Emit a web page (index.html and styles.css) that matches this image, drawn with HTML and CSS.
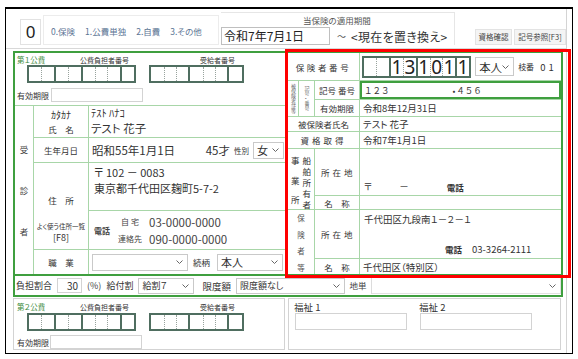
FILE: index.html
```html
<!DOCTYPE html>
<html lang="ja">
<head>
<meta charset="utf-8">
<link rel="stylesheet" href="styles.css">
</head>
<body>
<div class="frame">
  <div class="content">
    <div class="topbar">
      <div class="zero">0</div>
      <div class="kinds"><span>0.保険</span><span>1.公費単独</span><span>2.自費</span><span>3.その他</span></div>
      <div class="period">
        <div class="period-label">当保険の適用期間</div>
        <div class="period-row">
          <div class="date-input">令和7年7月1日</div>
          <span class="tilde">～</span>
          <span class="replace">&lt;現在を置き換え&gt;</span>
        </div>
      </div>
      <div class="btns">
        <div class="btn b1">資格確認</div>
        <div class="btn b2">記号参照[F3]</div>
      </div>
    </div>

    <div class="green">
      <div class="left">
        <div class="kohi">
          <div class="kohi-head"><span class="kh1">第１公費</span><span class="kh2">公費負担者番号</span><span class="kh3">受給者番号</span></div>
          <div class="digits">
            <div class="dg"><span></span><span></span></div>
            <div class="dg"><span></span><span></span></div>
            <div class="dg"><span></span><span></span><span></span></div>
            <div class="dg"><span></span></div>
            <div class="dg gap"><span></span><span></span><span></span></div>
            <div class="dg"><span></span><span></span><span></span></div>
            <div class="dg"><span></span></div>
          </div>
          <div class="valid"><span class="valid-l">有効期限</span><div class="inp valid-i"></div></div>
        </div>
        <div class="patient">
          <div class="side"><span>受</span><span>診</span><span>者</span></div>
          <div class="pl kn"><span class="kn1">ｶﾀｶﾅ</span><span class="kn2">氏　名</span></div>
          <div class="pv kana"><div class="hk">ﾃｽﾄ ﾊﾅｺ</div><div class="nm">テスト 花子</div></div>
          <div class="pl">生年月日</div>
          <div class="pv birth"><span>昭和55年1月1日</span><span class="age">45才</span><span class="sexl">性別</span><div class="sel w-sex"><span>女</span><svg width="7" height="4" viewBox="0 0 7 4"><path d="M0.5 0.5 L3.5 3.5 L6.5 0.5" fill="none" stroke="#666" stroke-width="1"/></svg></div></div>
          <div class="pl adr"><span class="ad1">住　所</span><span class="ad2">よく使う住所一覧</span><span class="ad3">[F8]</span></div>
          <div class="pv addr"><div>〒 102 － 0083</div><div>東京都千代田区麹町5-7-2</div></div>
          <div class="pv tel">
            <span class="tel-l">電話</span>
            <div class="tel-rows">
              <div class="tel-row"><span class="tel-k">自 宅</span><span class="tel-n">03-0000-0000</span></div>
              <div class="tel-row"><span class="tel-k">連絡先</span><span class="tel-n">090-0000-0000</span></div>
            </div>
          </div>
          <div class="pl">職　業</div>
          <div class="pv job"><div class="sel w-job"><span></span><svg width="7" height="4" viewBox="0 0 7 4"><path d="M0.5 0.5 L3.5 3.5 L6.5 0.5" fill="none" stroke="#666" stroke-width="1"/></svg></div><span class="rel">続柄</span><div class="sel w-rel"><span>本人</span><svg width="7" height="4" viewBox="0 0 7 4"><path d="M0.5 0.5 L3.5 3.5 L6.5 0.5" fill="none" stroke="#666" stroke-width="1"/></svg></div></div>
        </div>
      </div>

      <div class="ins">
        <div class="il c13 sp5">保険者番号</div>
        <div class="iv c4 num">
          <div class="dg big"><span></span><span></span></div>
          <div class="dg big"><span>1</span><span>3</span></div>
          <div class="dg big"><span>1</span><span>0</span><span>1</span></div>
          <div class="dg big"><span>1</span></div>
          <div class="sel w-hon"><span>本人</span><svg width="7" height="4" viewBox="0 0 7 4"><path d="M0.5 0.5 L3.5 3.5 L6.5 0.5" fill="none" stroke="#666" stroke-width="1"/></svg></div>
          <span class="eda">枝番</span><span class="edan">0 1</span>
        </div>

        <div class="tiny c1 rs2"><span>被保険者証等</span></div>
        <div class="tiny c2 rs2"><span>記号・番号</span></div>
        <div class="il c3">記号 番号</div>
        <div class="iv c4 kigo"><span class="k1">１２３</span><span class="k2">•４５６</span></div>
        <div class="il c3">有効期限</div>
        <div class="iv c4">令和8年12月31日</div>

        <div class="il c13">被保険者氏名</div>
        <div class="iv c4">テスト 花子</div>
        <div class="il c13 sp4">資格取得</div>
        <div class="iv c4">令和7年1月1日</div>

        <div class="vt c12 rs2 jig">
          <div class="vcol spread"><span>事</span><span>業</span><span>所</span></div>
          <div class="vcol"><span>船</span><span>舶</span><span>所</span><span>有</span><span>者</span></div>
        </div>
        <div class="il c3 sp2">所 在 地</div>
        <div class="iv c4 jaddr"><span class="z1">〒</span><span class="z2">－</span><span class="z3">電話</span></div>
        <div class="il c3">名　称</div>
        <div class="iv c4"></div>

        <div class="vt c12 rs2 hok">
          <div class="vcol spread small"><span>保</span><span>険</span><span>者</span><span>等</span></div>
        </div>
        <div class="il c3 sp2">所 在 地</div>
        <div class="iv c4 haddr"><div>千代田区九段南１－２－１</div><div class="htel"><span class="z3b">電話</span><span>03-3264-2111</span></div></div>
        <div class="il c3">名　称</div>
        <div class="iv c4">千代田区（特別区）</div>
      </div>

      <div class="burden">
        <span class="bl b-rate">負担割合</span>
        <div class="inp rate">30</div>
        <span class="pct">(%)</span>
        <span class="bl b-kyu">給付割</span>
        <div class="sel w-kyu"><span>給割７</span><svg width="7" height="4" viewBox="0 0 7 4"><path d="M0.5 0.5 L3.5 3.5 L6.5 0.5" fill="none" stroke="#666" stroke-width="1"/></svg></div>
        <span class="bl b-gen">限度額</span>
        <div class="sel w-gen"><span>限度額なし</span><svg width="7" height="4" viewBox="0 0 7 4"><path d="M0.5 0.5 L3.5 3.5 L6.5 0.5" fill="none" stroke="#666" stroke-width="1"/></svg></div>
        <div class="chitan">地単</div>
        <div class="sel w-chi"><span></span><svg width="7" height="4" viewBox="0 0 7 4"><path d="M0.5 0.5 L3.5 3.5 L6.5 0.5" fill="none" stroke="#666" stroke-width="1"/></svg></div>
      </div>
    </div>

    <div class="bottom">
      <div class="box kohi2">
        <div class="kohi-head"><span class="kh1">第２公費</span><span class="kh2">公費負担者番号</span><span class="kh3">受給者番号</span></div>
        <div class="digits">
          <div class="dg"><span></span><span></span></div>
          <div class="dg"><span></span><span></span></div>
          <div class="dg"><span></span><span></span><span></span></div>
          <div class="dg"><span></span></div>
          <div class="dg gap"><span></span><span></span><span></span></div>
          <div class="dg"><span></span><span></span><span></span></div>
          <div class="dg"><span></span></div>
        </div>
        <div class="valid"><span class="valid-l">有効期限</span><div class="inp valid-i"></div></div>
      </div>
      <div class="box fukushi">
        <div class="fk"><div class="fk-l">福祉 1</div><div class="inp fk-i"></div></div>
        <div class="fk"><div class="fk-l">福祉 2</div><div class="inp fk-i"></div></div>
      </div>
    </div>
  </div>
  <div class="redbox"></div>
</div>
</body>
</html>
```

FILE: styles.css
```css
* { box-sizing: border-box; }
body {
  margin: 0;
  font-family: "Noto Sans CJK JP", "Noto Sans", sans-serif;
  font-feature-settings: "palt";
  color: #333;
  background: #fff;
}
.frame {
  position: relative;
  margin: 7px 0 0 5px;
  width: 568px;
  height: 347px;
  border: 1px solid #000;
  border-top-width: 2px;
}
.content {
  width: 561px;
  height: 100%;
  border-right: 1px solid #d4d4d4;
}

/* top bar */
.topbar {
  display: flex;
  align-items: flex-end;
  height: 40px;
  padding-bottom: 3px;
  border-bottom: 1px solid #d8d8d8;
}
.zero {
  margin-left: 14px;
  width: 21px;
  height: 26px;
  border: 1px solid #e2e2e2;
  font-family: "Noto Sans", sans-serif;
  font-size: 17px;
  line-height: 24px;
  text-align: center;
  color: #222;
}
.kinds {
  margin-left: 2px;
  width: 176px;
  height: 30px;
  border: 1px solid #ececec;
  font-size: 8.5px;
  color: #5b7494;
  padding: 9px 0 0 7px;
  display: flex;
  gap: 10px;
  white-space: nowrap;
}
.period {
  margin-left: 2px;
  width: 234px;
  height: 33px;
  border-top: 1px solid #e6e6e6;
  border-right: 1px solid #e6e6e6;
  display: flex;
  flex-direction: column;
  justify-content: space-between;
}
.period-label {
  font-size: 8.5px;
  color: #555;
  padding: 1px 0 0 82px;
  line-height: 12px;
}
.period-row {
  display: flex;
  align-items: center;
  height: 18px;
  white-space: nowrap;
}
.date-input {
  flex: none;
  width: 109px;
  height: 18px;
  border: 1px solid #bfbfbf;
  font-size: 12px;
  line-height: 16px;
  padding-left: 2px;
  color: #222;
}
.tilde { margin-left: 7px; font-size: 9px; color: #555; }
.replace { margin-left: 5px; font-size: 12px; color: #333; letter-spacing: 0.3px; }
.btns { margin-left: auto; display: flex; gap: 2px; }
.btn {
  height: 16px;
  font-size: 7.5px;
  line-height: 14px;
  background: #f4f4f4;
  border: 1px solid #e3e3e3;
  text-align: center;
  color: #444;
}
.b1 { width: 37px; }
.b2 { width: 52px; }

/* green block */
.green {
  margin: 2px 0 0 7px;
  width: 550px;
  height: 246px;
  border: 2px solid #3f9f3f;
  display: grid;
  grid-template-columns: 271px 1fr;
  grid-template-rows: 221px 1fr;
}
.left { display: flex; flex-direction: column; }
.kohi { height: 52px; padding: 2px 0 0 2px; }
.kohi-head {
  display: grid;
  grid-template-columns: 63px 120px 1fr;
  height: 10px;
  line-height: 10px;
}
.kh1 { font-size: 7.5px; color: #3a8a3a; }
.kh2, .kh3 { font-size: 7px; color: #333; }
.digits { display: flex; margin-left: 10px; }
.dg {
  display: flex;
  height: 18px;
  border: 2px solid #4f6e60;
}
.dg + .dg { margin-left: -2px; }
.dg.gap { margin-left: 13px; }
.dg span { width: 12.4px; }
.dg span + span { border-left: 1px dotted #98a39d; }
.valid { display: flex; align-items: center; margin-top: 5px; height: 14px; }
.valid-l { width: 34px; font-size: 8px; color: #333; }
.inp { border: 1px solid #d3d3d3; background: #fff; }
.valid-i { width: 92px; height: 14px; }

/* patient table */
.patient {
  flex: 1;
  display: grid;
  grid-template-columns: 18px 54px 1fr;
  grid-template-rows: 31px 24px 47px 38px 24px;
  gap: 1px;
  padding-top: 1px;
  background: #a8d6a8;
}
.patient > div { background: #fff; }
.side {
  grid-row: 1 / 6;
  display: flex;
  flex-direction: column;
  align-items: center;
  padding-top: 37px;
  gap: 29px;
  font-size: 8.5px;
  line-height: 12px;
  color: #444;
}
.pl {
  display: flex;
  flex-direction: column;
  align-items: center;
  justify-content: center;
  font-size: 8.5px;
  color: #333;
}
.pl.kn { justify-content: flex-start; padding-top: 3px; }
.kn1 { font-size: 10px; line-height: 12px; }
.kn2 { line-height: 12px; margin-top: 2px; }
.pl.adr { grid-row: 3 / 5; justify-content: flex-start; padding-top: 31px; }
.ad1 { line-height: 12px; }
.ad2 { font-size: 6.5px; line-height: 10px; margin-top: 15px; white-space: nowrap; }
.ad3 { font-size: 9px; line-height: 12px; margin-top: 1px; }
.pv { color: #333; }
.kana { padding: 0 0 0 2px; }
.hk { font-size: 10.5px; line-height: 14px; }
.nm { font-size: 11.5px; line-height: 16px; }
.birth { display: flex; align-items: center; padding-left: 3px; font-size: 11.5px; }
.age { margin-left: auto; font-size: 11.5px; }
.sexl { font-size: 7.5px; margin: 0 4px 0 4px; }
.sel {
  display: flex;
  align-items: center;
  justify-content: space-between;
  border: 1px solid #c9c9c9;
  background: #fff;
  padding: 0 4px 0 3px;
  color: #333;
  white-space: nowrap;
}
.w-sex { width: 31px; height: 17px; margin-right: 2px; font-size: 11px; }
.addr { padding: 1px 0 0 5px; font-size: 11px; line-height: 16px; }
.tel { display: flex; align-items: center; padding-left: 5px; }
.tel-l { font-size: 8px; font-weight: bold; color: #444; width: 22px; }
.tel-rows { display: flex; flex-direction: column; }
.tel-row { display: flex; align-items: center; height: 17px; }
.tel-k { width: 28px; font-size: 8px; text-align: center; color: #444; }
.tel-n { margin-left: 5px; font-size: 11.5px; color: #444; }
.job { display: flex; align-items: center; padding-left: 3px; }
.w-job { width: 96px; height: 17px; }
.rel { font-size: 8.5px; margin: 0 7px 0 5px; }
.w-rel { width: 66px; height: 17px; font-size: 11px; }

/* insurance table */
.ins {
  border-left: 2px solid #3f9f3f;
  display: grid;
  grid-template-columns: 10px 15px 44px 1fr;
  grid-template-rows: 27px 18px 16px 14px 16px 46px 13px 48px 15px;
  gap: 1px;
  background: #a8d6a8;
}
.ins > div { background: #fff; }
.c1 { grid-column: 1; }
.c2 { grid-column: 2; }
.c3 { grid-column: 3; }
.c4 { grid-column: 4; }
.c12 { grid-column: 1 / 3; }
.c13 { grid-column: 1 / 4; }
.rs2 { grid-row: span 2; }
.il {
  display: flex;
  align-items: center;
  justify-content: center;
  font-size: 8.5px;
  color: #333;
  white-space: nowrap;
}
.sp5 { letter-spacing: 2.6px; font-size: 8.5px; }
.sp4 { letter-spacing: 3px; }
.sp2 { letter-spacing: 0.5px; }
.iv {
  display: flex;
  align-items: center;
  padding-left: 3px;
  font-size: 9.5px;
  color: #333;
  white-space: nowrap;
}
.num { padding-left: 2px; }
.dg.big { height: 22px; }
.dg.big span {
  font-family: "Noto Sans", sans-serif;
  font-size: 19px;
  line-height: 18px;
  text-align: center;
  color: #222;
}
.w-hon { width: 39px; height: 19px; margin-left: 4px; font-size: 11.5px; }
.eda { font-size: 8px; margin-left: 4px; }
.edan { font-size: 9.5px; margin-left: 6px; letter-spacing: 0.5px; }
.tiny {
  display: flex;
  justify-content: center;
  align-items: center;
  overflow: hidden;
}
.tiny span {
  writing-mode: vertical-rl;
  font-size: 5px;
  line-height: 6px;
  color: #666;
}
.ins > .kigo { box-shadow: inset 0 0 0 2px #3f9f3f; font-size: 8.5px; padding-left: 5px; }
.k1 { letter-spacing: 2px; }
.k2 { margin-left: 62px; letter-spacing: 2px; }
.vt {
  display: flex;
  justify-content: center;
  gap: 3px;
  padding: 6px 0 4px;
  font-size: 8.5px;
  line-height: 11px;
  color: #333;
}
.vcol { display: flex; flex-direction: column; }
.vcol.spread { justify-content: space-between; }
.hok { padding: 2px 0 1px; }
.vcol.small { font-size: 7.5px; color: #555; }
.jaddr { align-items: flex-end; padding-bottom: 2px; padding-left: 4px; }
.z2 { margin-left: 27px; }
.z3 { margin-left: 38px; font-weight: bold; font-size: 8.5px; }
.haddr {
  flex-direction: column;
  align-items: flex-start;
  justify-content: space-between;
  padding: 2px 0 2px 4px;
}
.htel { padding-left: 81px; }
.z3b { font-weight: bold; font-size: 8.5px; margin-right: 10px; }

/* burden row */
.burden {
  grid-column: 1 / -1;
  border-top: 2px solid #3f9f3f;
  display: flex;
  align-items: center;
  padding-left: 1px;
}
.bl { font-size: 9px; color: #333; }
.b-gen { font-size: 9.5px; margin-left: 8px; }
.b-kyu { margin-left: 5px; }
.rate {
  width: 25px;
  height: 15px;
  margin-left: 5px;
  font-size: 10px;
  line-height: 13px;
  text-align: right;
  padding-right: 3px;
}
.pct { font-size: 9px; margin-left: 5px; color: #444; }
.w-kyu { width: 56px; height: 16px; margin-left: 5px; font-size: 9px; }
.w-gen { width: 109px; height: 16px; margin-left: 5px; font-size: 9px; }
.chitan {
  width: 27px;
  height: 17px;
  font-size: 8.5px;
  line-height: 16px;
  text-align: center;
  border-right: 1px solid #dcdcdc;
  color: #444;
}
.w-chi { flex: 1; height: 17px; border-color: #e2e2e2; border-left: none; }

/* bottom */
.bottom {
  display: flex;
  gap: 3px;
  margin: 1px 0 0 7px;
  height: 52px;
}
.box { border: 1px solid #d3d3d3; }
.kohi2 { width: 272px; padding: 3px 0 0 3px; }
.kohi2 .digits { margin-top: 1px; }
.kohi2 .valid { margin-top: 4px; }
.kohi2 .valid-l { width: 33px; }
.fukushi { width: 273px; display: flex; gap: 13px; padding: 2px 0 0 6px; }
.fk { width: 112px; }
.fk-l { font-size: 9.5px; line-height: 12px; color: #333; margin-left: -1px; }
.fk-i { width: 112px; height: 17px; }

/* overlay annotation */
.redbox {
  position: absolute;
  left: 279px;
  top: 40px;
  width: 286px;
  height: 229px;
  border: 3px solid #f00;
  pointer-events: none;
}
```
